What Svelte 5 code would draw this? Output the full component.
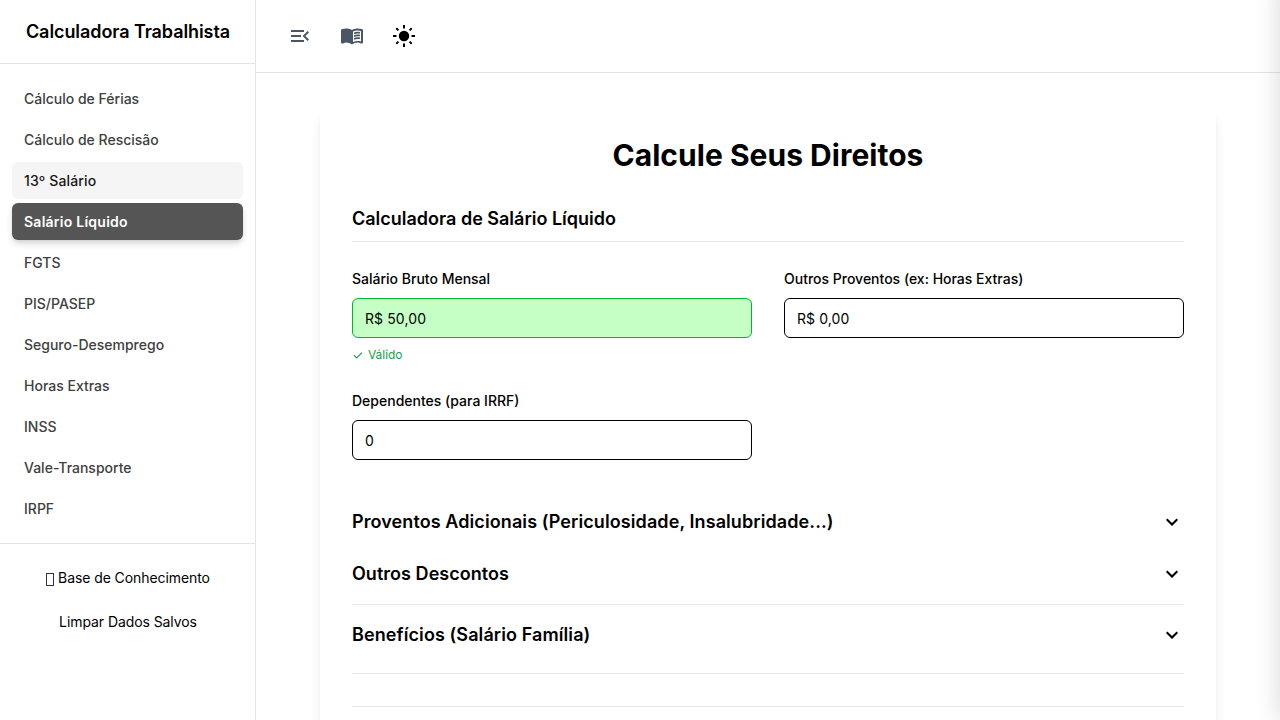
<script>
  const items = [
    'Cálculo de Férias', 'Cálculo de Rescisão', '13º Salário', 'Salário Líquido', 'FGTS', 'PIS/PASEP',
    'Seguro-Desemprego', 'Horas Extras', 'INSS', 'Vale-Transporte', 'IRPF'
  ];
  const active = 'Salário Líquido';
  const hovered = '13º Salário';
</script>

{#snippet chevron()}
  <svg class="chevron" viewBox="0 0 24 24"><path d="M12 15.9l-6-6 1.400-1.400 4.600 4.600 4.600-4.600L18 9.900z" /></svg>
{/snippet}

<div class="app">
  <aside class="sidebar">
    <header class="brand">Calculadora Trabalhista</header>
    <nav>
      {#each items as item}
        <a class="item" class:active={item === active} class:hovered={item === hovered}>{item}</a>
      {/each}
    </nav>
    <footer>
      <button><span class="glyph"></span> Base de Conhecimento</button>
      <button>Limpar Dados Salvos</button>
    </footer>
  </aside>

  <div class="content">
    <header class="toolbar">
      <svg class="muted" viewBox="0 0 24 24"><path d="M3 18h13v-2H3v2zm0-5h10v-2H3v2zm0-7v2h13V6H3zm18 9.6L17.4 12 21 8.4 19.6 7l-5 5 5 5 1.4-1.4z" /></svg>
      <svg class="muted" viewBox="0 -0.600 24 24">
        <path d="M13 6.9v10.5c1.4-.6 2.9-.9 4.5-.9 1.2 0 2.3.1 3.5.5V6.6A10 10 0 0 0 17.500 6c-1.600 0-3.100.3-4.500.9zM12 20c-.8-.6-1.700-1.100-2.600-1.500A8.600 8.600 0 0 0 6.500 18c-1.200 0-2.400.3-3.500.8-1 .4-2-.1-2-1.100V5.700c0-.5.200-.8.600-1C3.100 4.200 4.800 4 6.500 4c2 0 3.800.5 5.500 1.500C13.700 4.500 15.500 4 17.500 4c1.700 0 3.400.2 4.900.7.400.2.600.500.600 1v12c0 1-1 1.500-2 1.100-1.100-.5-2.300-.8-3.500-.8-1 0-2 .2-2.900.5-.9.400-1.800.900-2.600 1.500z" fill-rule="evenodd" />
        <path d="M14 9.600V8c1.800-.8 3.900-.9 6-.5V9c-2-.4-4-.3-6 .6zm0 5.500v-1.600c1.800-.8 3.900-.9 6-.5v1.500c-2-.4-4-.3-6 .6zm0-2.750v-1.600c1.800-.8 3.900-.9 6-.5v1.500c-2-.4-4-.3-6 .6z" />
      </svg>
      <svg viewBox="0 0 24 24">
        <circle cx="12" cy="12" r="5.200" />
        <path d="M11 1h2v3.500h-2zM11 19.500h2V23h-2zM1 11h3.500v2H1zM19.500 11H23v2h-3.500zM16.900 5.700L19 3.600 20.400 5l-2.100 2.100zM3.600 5L5 3.600l2.100 2.100-1.400 1.400zM3.600 19l2.100-2.100 1.400 1.400L5 20.400zM16.900 18.300l1.400-1.400 2.100 2.100-1.400 1.400z" />
      </svg>
    </header>

    <main>
      <section class="card">
        <h1>Calcule Seus Direitos</h1>
        <h2>Calculadora de Salário Líquido</h2>
        <div class="form">
          <div class="field">
            <label for="gross">Salário Bruto Mensal</label>
            <input id="gross" class="valid" value="R$ 50,00" />
            <p class="message">
              <svg viewBox="0 0 12 12"><path d="M2 6.200l2.700 2.700 5.300-5.300" /></svg>Válido
            </p>
          </div>
          <div class="field">
            <label for="other">Outros Proventos (ex: Horas Extras)</label>
            <input id="other" value="R$ 0,00" />
          </div>
          <div class="field">
            <label for="dependents">Dependentes (para IRRF)</label>
            <input id="dependents" value="0" />
          </div>
        </div>
        <div class="section first"><h3>Proventos Adicionais (Periculosidade, Insalubridade...)</h3>{@render chevron()}</div>
        <div class="section second"><h3>Outros Descontos</h3>{@render chevron()}</div>
        <div class="section third"><h3>Benefícios (Salário Família)</h3>{@render chevron()}</div>
        <div class="results"></div>
      </section>
    </main>
  </div>
  <div class="drawer"></div>
</div>

<style>
  :global(body) { overflow: hidden; }
  .app, .app * { box-sizing: border-box; }
  .app {
    position: relative;
    display: flex;
    width: 100%;
    height: 100vh;
    overflow: hidden;
    background: #fff;
    color: #000;
    font: 14px/20px Inter, sans-serif;
  }
  h1, h2, h3, p { margin: 0; }
  svg { display: block; fill: currentColor; flex: none; }
  .sidebar {
    width: 256px;
    flex: none;
    border-right: 1px solid #e5e5e5;
  }
  .brand {
    height: 64px;
    display: flex;
    align-items: center;
    justify-content: center;
    padding-left: 1px;
    border-bottom: 1px solid #e5e5e5;
    font-size: 18px;
    line-height: 28px;
    font-weight: 600;
    letter-spacing: -.08px;
  }
  nav {
    display: flex;
    flex-direction: column;
    gap: 4px;
    padding: 16px 12px;
  }
  .item {
    height: 37px;
    padding: 8px 12px;
    border-radius: 6px;
    color: #404040;
    font-weight: 500;
    line-height: 21px;
  }
  .hovered { background: #f5f5f5; color: #171717; letter-spacing: .14px; }
  .active {
    background: #555;
    color: #fff;
    font-weight: 600;
    letter-spacing: .25px;
    box-shadow: 0 4px 6px -1px rgba(0, 0, 0, .1), 0 2px 4px -2px rgba(0, 0, 0, .1), 0 4px 8px rgba(0, 0, 0, .06);
  }
  footer {
    display: flex;
    flex-direction: column;
    gap: 8px;
    padding: 16px;
    border-top: 1px solid #e5e5e5;
  }
  button {
    display: flex;
    align-items: center;
    justify-content: center;
    gap: 4px;
    height: 36px;
    padding: 0 0 0 1px;
    border: 0;
    background: none;
    color: #000;
    font: 14px/20px Inter, sans-serif;
    letter-spacing: -.08px;
  }
  .glyph { width: 8px; height: 13px; margin-top: 2px; border: 1px solid #333; }
  .content { flex: 1; min-width: 0; }
  .toolbar {
    display: flex;
    gap: 28px;
    height: 73px;
    padding: 24px 32px;
    border-bottom: 1px solid #e5e5e5;
  }
  .toolbar svg { width: 24px; height: 24px; }
  .muted { color: #4b5563; }
  main { padding: 32px 64px; }
  .card {
    height: 900px;
    padding: 32px;
    border-radius: 8px;
    background: #fff;
    box-shadow: 0 10px 15px -3px rgba(0, 0, 0, .1), 0 4px 6px -4px rgba(0, 0, 0, .1);
  }
  h1 {
    margin-bottom: 32px;
    font-size: 30px;
    line-height: 36px;
    font-weight: 700;
    letter-spacing: .02px;
    text-align: center;
  }
  h2, h3 { font-size: 18px; line-height: 28px; font-weight: 600; }
  h3 { letter-spacing: .09px; }
  .second h3 { letter-spacing: .04px; }
  h2 { padding-bottom: 8px; border-bottom: 1px solid #e5e5e5; }
  .form {
    display: grid;
    grid-template-columns: 1fr 1fr;
    gap: 28px 32px;
    padding-top: 27px;
  }
  label { display: block; margin-bottom: 9px; font-weight: 500; }
  input {
    display: block;
    width: 100%;
    height: 40px;
    padding: 0 12px;
    border: 1px solid #000;
    border-radius: 6px;
    background: #fff;
    color: #000;
    font: 14px/20px Inter, sans-serif;
    letter-spacing: .1px;
    outline: none;
  }
  input.valid { border-color: #00b82e; background: #c6ffc6; }
  .message {
    display: flex;
    align-items: center;
    gap: 4px;
    margin-top: 9px;
    color: #16a34a;
    font-size: 12px;
    line-height: 16px;
    letter-spacing: -.05px;
  }
  .message svg { width: 12px; height: 12px; fill: none; stroke: currentColor; stroke-width: 1.200; }
  .section { display: flex; align-items: center; justify-content: space-between; }
  .chevron { width: 24px; height: 24px; }
  .first { margin-top: 48px; }
  .second { margin-top: 24px; padding-bottom: 16px; border-bottom: 1px solid #e5e7eb; }
  .third { padding: 16px 0 24px; border-bottom: 1px solid #e5e7eb; }
  .results { margin-top: 32px; border-top: 1px solid #e5e7eb; }
  .drawer {
    position: absolute;
    left: 100%;
    top: -20px;
    width: 384px;
    height: calc(100% + 20px);
    box-shadow: 0 0 24px rgba(0, 0, 0, .16);
  }
</style>
